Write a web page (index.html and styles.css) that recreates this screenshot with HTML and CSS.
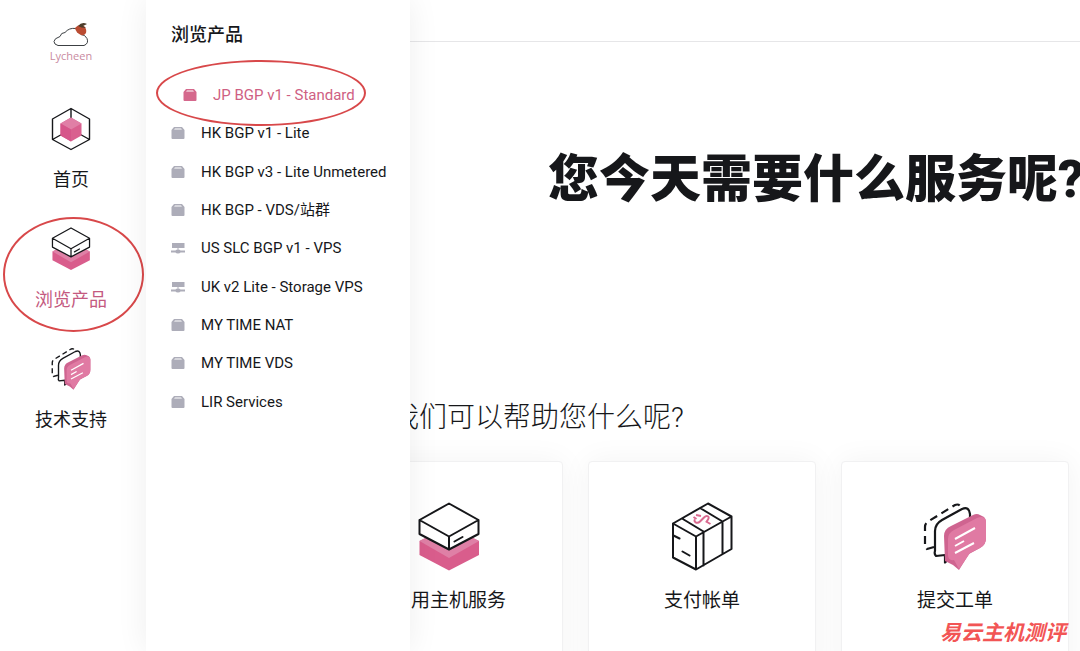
FILE: index.html
```
<!DOCTYPE html>
<html lang="zh-CN">
<head>
    <meta charset="UTF-8">
    <title>Lycheen</title>
    <meta name="viewport" content="width=device-width, initial-scale=1.0">
    <link rel="stylesheet" href="styles.css">
</head>
<body>
    <!-- 图标 -->
    <svg class="sprite" width="0" height="0" aria-hidden="true">
        <symbol id="icon-home" viewBox="0 0 40 44">
            <path d="M20 1.500 38.500 12v20.500L20 42.500 1.500 32.500V12ZM20 1.500V12M1.500 32.500l9-5M38.500 32.500l-9-5" fill="none" stroke="#16171a" stroke-width="1.400" stroke-linejoin="round"/>
            <path d="M20 10.500 30.500 16.500v12L20 34.500 9.500 28.500v-12Z" fill="#d9608f"/>
            <path d="M20 10.500 30.500 16.500 20 22.500 9.500 16.500Z" fill="#e07fa6"/>
            <path d="M9.500 16.500 20 22.500v12L9.500 28.500Z" fill="#d6568a"/>
        </symbol>
        <symbol id="icon-server" viewBox="0 0 62 70">
            <path d="M1.500 39 31 24l30 15v14L31 68.500 1.500 53Z" fill="#d95d8c"/>
            <path d="M1.500 39 31 24l30 15L31 56Z" fill="#df80a6"/>
            <path d="M31 1.500 61 17v15L31 47.500 1.500 32V17Z" fill="#fff"/>
            <path d="M31 1.500 60.500 18v14L31 47.500 1.500 32V18ZM1.500 18 31 34.500 60.500 18M31 34.500v13M36.500 39.500l8-4.500" fill="none" stroke="#16171a" stroke-width="2" stroke-linejoin="round" stroke-linecap="round"/>
        </symbol>
        <symbol id="icon-bill" viewBox="0 0 62 70">
            <path d="M37 1.500 60.500 14.500V47L25 67.500 2 55.500V21.500ZM2 21.500 25 34.500 60.500 14.500M25 34.500v33M11 16.500 32.500 29.500v34M29 6l22.500 13.500v32.500M2.500 33.500l6 3M11.500 49.500l7 4" fill="none" stroke="#16171a" stroke-width="2" stroke-linejoin="round" stroke-linecap="round"/>
            <path d="M24 17.500c-2 2 2 5 5 2l4-4c3-3 6-1 4 2l-2 3M22.500 15l3 2M36 20l3.500 2M25 13l5 1" fill="none" stroke="#d9698f" stroke-width="2"/>
        </symbol>
        <symbol id="icon-chat" viewBox="0 0 64 70">
            <path d="M11 45 4 47 2 44V25q0-4 4-6L32 3q5-2 6 4" fill="none" stroke="#16171a" stroke-width="2.200" stroke-dasharray="8 5"/>
            <path d="M22 60.500V53l-9 1q-2-2-1-5V29q0-7 7-11l20-11q7-3 8 5v28L29 54Z" fill="#fff" stroke="#16171a" stroke-width="2.200" stroke-linejoin="round"/>
            <path d="M21 34q0-7 7-10l22-11q4-2 7 0l4 2q2 2 2 5v16q0 7-6 10l-11 6-10 16-6-5-8-4Z" fill="#cf6490"/>
            <path d="M25 37q0-6 6-9l23-12q8-3 9 3v17q0 7-6 10l-10 5-11 16-5-9q-6 1-6-5Z" fill="#e07aa3"/>
            <path d="m32 37 20-11M32 44l9-5M32 51l19-10" fill="none" stroke="#fff" stroke-width="2"/>
        </symbol>
        <symbol id="icon-bag" viewBox="0 0 14 14">
            <path fill-rule="evenodd" d="M3 1h8l2.500 3V12q0 1-1 1h-11q-1 0-1-1V4ZM4 2.500 3 3.500h8l-1-1Z"/>
        </symbol>
        <symbol id="icon-node" viewBox="0 0 14 14">
            <path d="M1 2h12.500v5H1ZM6.500 7h1v2h-1ZM0 9.500h4.500q.5-1 2.500-1t2.500 1H14v2H9.500q-.5 1-2.500 1t-2.500-1H0Z"/>
        </symbol>
    </svg>

    <div class="app">
        <aside class="sidebar">
            <a class="logo" href="#">
                <svg width="40" height="26" viewBox="0 0 40 26" aria-hidden="true">
                    <path d="M7 23.500h26q5-2 3-7-2-4-6-4 1-5-5-6-7-1-11 4-4 0-5 4-6 2-6 5 0 3 4 4Z" fill="#fff" stroke="#3c4043" stroke-width="1"/>
                    <path d="M24 6q4-5 9-2 3 3 2 7-2 3-5 2-5-2-6-7Z" fill="#ba4c32"/>
                    <path d="M27 4q4-5 9-2l-4 2 3 2q-5 0-8-2Z" fill="#4d3e2b"/>
                </svg>
                <span>Lycheen</span>
            </a>
            <nav class="main-nav">
                <a href="#">
                    <svg width="40" height="44"><use href="#icon-home"/></svg>
                    <span>首页</span>
                </a>
                <a class="active" href="#">
                    <svg width="40" height="44"><use href="#icon-server"/></svg>
                    <span>浏览产品</span>
                </a>
                <a href="#">
                    <svg width="40" height="44"><use href="#icon-chat"/></svg>
                    <span>技术支持</span>
                </a>
            </nav>
            <div class="mark mark-nav"></div>
        </aside>

        <main class="content">
            <header class="topbar"></header>
            <section class="hero">
                <h1>您今天需要什么服务呢?</h1>
            </section>
            <section class="help">
                <h2>今天我们可以帮助您什么呢?</h2>
                <div class="cards">
                    <a class="card" href="#">
                        <svg width="62" height="70"><use href="#icon-server"/></svg>
                        <span>启用主机服务</span>
                    </a>
                    <a class="card" href="#">
                        <svg width="62" height="70"><use href="#icon-bill"/></svg>
                        <span>支付帐单</span>
                    </a>
                    <a class="card" href="#">
                        <svg width="64" height="70"><use href="#icon-chat"/></svg>
                        <span>提交工单</span>
                    </a>
                </div>
            </section>
        </main>

        <!-- 产品子菜单 -->
        <div class="submenu">
            <h3>浏览产品</h3>
            <ul>
                <li><a class="active" href="#"><svg width="14" height="14"><use href="#icon-bag"/></svg>JP BGP v1 - Standard</a></li>
                <li><a href="#"><svg width="14" height="14"><use href="#icon-bag"/></svg>HK BGP v1 - Lite</a></li>
                <li><a href="#"><svg width="14" height="14"><use href="#icon-bag"/></svg>HK BGP v3 - Lite Unmetered</a></li>
                <li><a href="#"><svg width="14" height="14"><use href="#icon-bag"/></svg>HK BGP - VDS/站群</a></li>
                <li><a href="#"><svg width="14" height="14"><use href="#icon-node"/></svg>US SLC BGP v1 - VPS</a></li>
                <li><a href="#"><svg width="14" height="14"><use href="#icon-node"/></svg>UK v2 Lite - Storage VPS</a></li>
                <li><a href="#"><svg width="14" height="14"><use href="#icon-bag"/></svg>MY TIME NAT</a></li>
                <li><a href="#"><svg width="14" height="14"><use href="#icon-bag"/></svg>MY TIME VDS</a></li>
                <li><a href="#"><svg width="14" height="14"><use href="#icon-bag"/></svg>LIR Services</a></li>
            </ul>
            <div class="mark mark-item"></div>
        </div>

        <div class="watermark">易云主机测评</div>
    </div>
</body>
</html>
```
FILE: styles.css
```
* {
    box-sizing: border-box;
}
body {
    margin: 0;
    background: #fff;
    color: #16171a;
    font-family: Roboto, "Noto Sans CJK SC", sans-serif;
}
a {
    color: inherit;
    text-decoration: none;
}
svg {
    display: block;
}
.sprite {
    position: absolute;
}
.app {
    position: relative;
    display: flex;
    height: 100vh;
    overflow: hidden;
}

/* 左侧导航 */
.sidebar {
    position: relative;
    flex: 0 0 146px;
    padding: 0 4px;
}
.logo {
    display: flex;
    flex-direction: column;
    align-items: center;
    margin-right: 4px;
    padding-top: 22px;
    color: #c98a9f;
    font-family: "Open Sans", sans-serif;
    font-size: 11px;
    line-height: 16px;
}
.main-nav {
    display: flex;
    flex-direction: column;
    gap: 32px;
    padding-top: 43px;
}
.main-nav a {
    display: flex;
    flex-direction: column;
    align-items: center;
    gap: 14px;
    margin-right: 4px;
    font-size: 18px;
    line-height: 30px;
}
.main-nav .active {
    color: #c45a80;
}

/* 子菜单 */
.submenu {
    position: absolute;
    top: 0;
    bottom: 0;
    left: 146px;
    width: 264px;
    padding: 20px 16px 0 25px;
    background: #fff;
    box-shadow: 0 0 30px rgba(0, 0, 0, 0.07);
}
.submenu h3 {
    margin: 0 0 26px;
    font-size: 18px;
    font-weight: 500;
    line-height: 30px;
}
.submenu ul {
    display: grid;
    grid-template-rows: repeat(9, 1fr);
    height: 345px;
    margin: 0;
    padding: 0;
    list-style: none;
}
.submenu li a {
    display: flex;
    align-items: center;
    gap: 16px;
    height: 100%;
    font-size: 15px;
    line-height: 18px;
    white-space: nowrap;
}
.submenu li svg {
    fill: #adadb9;
}
.submenu li .active {
    padding-left: 12px;
    color: #cf5f83;
}
.submenu li .active svg {
    fill: #d5688c;
}

/* 红圈标注 */
.mark {
    position: absolute;
    border: 2px solid #d8484a;
    border-radius: 50%;
    pointer-events: none;
}
.mark-nav {
    top: 217px;
    left: 3px;
    width: 141px;
    height: 115px;
}
.mark-item {
    top: 60px;
    left: 10px;
    width: 210px;
    height: 66px;
}

/* 主内容 */
.content {
    flex: 1;
    min-width: 0;
}
.topbar {
    height: 42px;
    border-bottom: 1px solid #e6e6e8;
}
.hero {
    height: 354px;
    padding: 100px 0 0 402px;
}
.hero h1 {
    margin: 0;
    font-size: 51px;
    font-weight: 900;
    line-height: 76px;
    white-space: nowrap;
}
.help {
    padding: 0 11px 0 189px;
}
.help h2 {
    margin: 0 0 21px;
    font-size: 28px;
    font-weight: 300;
    line-height: 44px;
}
.cards {
    display: grid;
    grid-template-columns: repeat(3, 1fr);
    gap: 25px;
}
.card {
    display: flex;
    flex-direction: column;
    align-items: center;
    gap: 14px;
    min-height: 220px;
    padding-top: 40px;
    border: 1px solid #f1f1f2;
    border-radius: 4px;
    background: #fff;
    box-shadow: 0 0 30px rgba(0, 0, 0, 0.05);
    font-size: 19px;
    line-height: 30px;
}

.watermark {
    position: absolute;
    right: 14px;
    bottom: 4px;
    color: #f25555;
    font-size: 21px;
    font-style: italic;
    font-weight: 700;
    line-height: 28px;
}
```
